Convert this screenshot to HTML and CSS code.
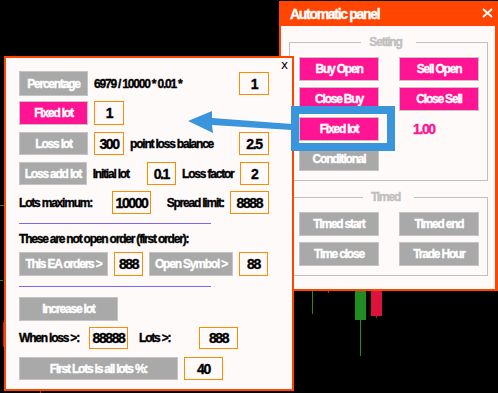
FILE: index.html
```html
<!DOCTYPE html>
<html lang="en">
<head>
    <meta charset="UTF-8">
    <title>Automatic panel</title>
    <link rel="stylesheet" href="styles.css">
</head>
<body>
    <!-- chart bits peeking out behind the panels -->
    <div class="chart">
        <span class="bit dash-a"></span>
        <span class="bit dash-b"></span>
        <span class="bit red-wick-a"></span>
        <span class="bit red-tick"></span>
        <span class="bit green-wick-a"></span>
        <span class="bit red-dot"></span>
        <span class="bit green-body"></span>
        <span class="bit green-wick-b"></span>
        <span class="bit red-body"></span>
        <span class="bit red-wick-b"></span>
    </div>

    <div class="auto-panel">
        <div class="titlebar">
            <span>Automatic panel</span>
            <svg class="close-x" width="11" height="10" viewBox="0 0 11 10">
                <path d="M1 1 L10 9 M10 1 L1 9" stroke="#fff" stroke-width="1.8" fill="none"/>
            </svg>
        </div>

        <fieldset class="group">
            <legend>Setting</legend>
            <div class="btn-grid">
                <div class="btn pink">Buy Open</div>
                <div class="btn pink">Sell Open</div>
                <div class="btn pink">Close Buy</div>
                <div class="btn pink">Close Sell</div>
                <div class="btn pink">Fixed lot</div>
                <div class="lot-value">1.00</div>
                <div class="btn grey">Conditional</div>
            </div>
        </fieldset>

        <fieldset class="group">
            <legend>Timed</legend>
            <div class="btn-grid">
                <div class="btn grey">Timed start</div>
                <div class="btn grey">Timed end</div>
                <div class="btn grey">Time close</div>
                <div class="btn grey">Trade Hour</div>
            </div>
        </fieldset>
    </div>

    <div class="lot-panel">
        <span class="small-x">x</span>

        <div class="row r-first">
            <div class="btn grey">Percentage</div>
            <span class="label">6979 / 10000 * 0.01 *</span>
            <div class="field push">1</div>
        </div>

        <div class="row r-fixed">
            <div class="btn pink">Fixed lot</div>
            <div class="field">1</div>
        </div>

        <div class="row r-loss">
            <div class="btn grey">Loss lot</div>
            <div class="field">300</div>
            <span class="label">point loss balance</span>
            <div class="field push">2.5</div>
        </div>

        <div class="row r-loss">
            <div class="btn grey">Loss add lot</div>
            <span class="label w-initial">Initial lot</span>
            <div class="field">0.1</div>
            <span class="label">Loss factor</span>
            <div class="field push">2</div>
        </div>

        <div class="row r-max">
            <span class="label w-max">Lots maximum:</span>
            <div class="field wide">10000</div>
            <span class="label gap-spread">Spread limit:</span>
            <div class="field wide push">8888</div>
        </div>

        <div class="divider d-first"></div>

        <div class="note">These are not open order (first order):</div>

        <div class="row r-orders">
            <div class="btn grey w-ea">This EA orders &gt;</div>
            <div class="field">888</div>
            <div class="btn grey w-sym">Open Symbol &gt;</div>
            <div class="field">88</div>
        </div>

        <div class="divider d-second"></div>

        <div class="row r-increase">
            <div class="btn grey w-inc">Increase lot</div>
        </div>

        <div class="row r-when">
            <span class="label w-when">When loss &gt;:</span>
            <div class="field wide">88888</div>
            <span class="label w-lots">Lots &gt;:</span>
            <div class="field wide">888</div>
        </div>

        <div class="row r-all">
            <div class="btn grey w-all">First Lots is all lots %:</div>
            <div class="field wide">40</div>
        </div>
    </div>

    <!-- callout: arrow from the highlighted button to the lot panel -->
    <svg class="callout" width="498" height="393" viewBox="0 0 498 393">
        <polygon points="188,121 212,111 212,118 292,124 292,130 212,125 213,133" fill="#3a95dd"/>
        <rect x="295" y="110" width="96" height="37" fill="none" stroke="#3a95dd" stroke-width="8"/>
    </svg>
</body>
</html>
```

FILE: styles.css
```css
* {
    box-sizing: border-box;
}
body {
    margin: 0;
    width: 498px;
    height: 393px;
    position: relative;
    overflow: hidden;
    background: #000;
    font-family: "Liberation Sans", Arial, sans-serif;
    font-weight: bold;
    font-size: 12px;
    letter-spacing: -1.2px;
    -webkit-text-stroke: 0.35px currentColor;
    color: #000;
}

/* chart */
.bit {
    position: absolute;
    display: block;
}
.dash-a { left: 0; top: 205px; width: 4px; height: 1px; background: #228b22; }
.dash-b { left: 0; top: 280px; width: 3px; height: 1px; background: #228b22; }
.red-wick-a { left: 3px; top: 322px; width: 1px; height: 25px; background: #dc143c; }
.red-tick { left: 40px; top: 391px; width: 1px; height: 2px; background: #dc143c; }
.green-wick-a { left: 312px; top: 291px; width: 1px; height: 23px; background: #228b22; }
.red-dot { left: 328px; top: 291px; width: 1px; height: 2px; background: #dc143c; }
.green-body { left: 355px; top: 291px; width: 11px; height: 29px; background: #228b22; }
.green-wick-b { left: 360px; top: 320px; width: 1px; height: 36px; background: #228b22; }
.red-body { left: 371px; top: 291px; width: 11px; height: 25px; background: #dc143c; }
.red-wick-b { left: 376px; top: 316px; width: 1px; height: 2px; background: #dc143c; }

/* shared controls */
.btn {
    display: flex;
    align-items: center;
    justify-content: center;
    height: 24px;
    color: #fff;
    border: 1px solid #c4c4c4;
    white-space: nowrap;
}
.pink {
    background: #ff1493;
}
.grey {
    background: #a9a9a9;
}
.field {
    display: flex;
    align-items: center;
    justify-content: center;
    width: 30px;
    height: 23px;
    border: 1px solid #ff8c00;
    background: #fffafa;
    font-size: 14px;
    letter-spacing: -1.4px;
}
.field.wide {
    width: 39px;
}
.label {
    white-space: nowrap;
}

/* automatic panel window */
.auto-panel {
    position: absolute;
    left: 279px;
    top: 1px;
    width: 219px;
    height: 290px;
    background: #fffafa;
    border: 2px solid #ff4500;
    border-top: 0;
    border-right-width: 3px;
}
.titlebar {
    height: 25px;
    background: #ff4500;
    color: #fff;
    font-size: 14px;
    letter-spacing: -1.3px;
    display: flex;
    align-items: center;
    justify-content: space-between;
    padding: 0 2px 0 9px;
}
.close-x {
    display: block;
    margin-top: -1px;
}
.group {
    margin: 9px 7px 0 8px;
    padding: 8px 9px 9px 9px;
    border: 1px solid #c0c0c0;
    min-width: 0;
}
.group legend {
    margin: 0 auto;
    padding: 0 14px 0 8px;
    color: #c0c0c0;
    font-size: 12px;
    line-height: 14px;
}
.btn-grid {
    display: grid;
    grid-template-columns: 80px 80px;
    grid-auto-rows: 24px;
    column-gap: 20px;
    row-gap: 6px;
}
.lot-value {
    display: flex;
    align-items: center;
    padding-left: 14px;
    color: #ff1493;
    font-size: 14px;
    letter-spacing: -1.4px;
}

/* lot settings window */
.lot-panel {
    position: absolute;
    left: 4px;
    top: 56px;
    width: 290px;
    height: 335px;
    background: #fffafa;
    border: 2px solid #ff4500;
    padding: 13px 23px 0 13px;
    z-index: 2;
}
.small-x {
    position: absolute;
    right: 4px;
    top: 0;
    font-family: "DejaVu Sans", sans-serif;
    font-weight: normal;
    font-size: 12px;
    letter-spacing: 0;
    -webkit-text-stroke: 0;
}
.row {
    display: flex;
    align-items: center;
    gap: 6px;
}
.row .btn {
    width: 69px;
}
.push {
    margin-left: auto;
}
.r-first {
    height: 25px;
}
.r-first .btn {
    height: 25px;
}
.r-fixed {
    height: 24px;
    margin-top: 5px;
}
.r-fixed .field {
    height: 24px;
}
.r-loss {
    height: 23px;
    margin-top: 7px;
}
.r-loss .btn {
    height: 23px;
}
.w-initial {
    width: 49px;
}
.r-max {
    height: 23px;
    margin-top: 6px;
}
.w-max {
    width: 89px;
}
.gap-spread {
    margin-left: 10px;
}
.r-max .field.push {
    width: 40px;
}
.divider {
    width: 192px;
    height: 1px;
    background: #7b68ee;
}
.d-first {
    margin-top: 9px;
}
.note {
    margin-top: 8px;
    line-height: 14px;
}
.r-orders {
    height: 24px;
    margin-top: 6px;
}
.r-orders .field {
    width: 29px;
    height: 24px;
}
.row .w-ea {
    width: 89px;
}
.row .w-sym {
    width: 84px;
}
.d-second {
    margin-top: 10px;
}
.r-increase {
    height: 24px;
    margin-top: 10px;
}
.row .w-inc {
    width: 99px;
}
.r-when {
    height: 22px;
    margin-top: 6px;
}
.r-when .field {
    height: 22px;
}
.w-when {
    width: 64px;
}
.w-lots {
    width: 54px;
    margin-left: 5px;
}
.r-all {
    height: 23px;
    margin-top: 8px;
}
.row .w-all {
    width: 159px;
    height: 23px;
}

/* callout overlay */
.callout {
    position: absolute;
    left: 0;
    top: 0;
    z-index: 5;
    pointer-events: none;
}
```
